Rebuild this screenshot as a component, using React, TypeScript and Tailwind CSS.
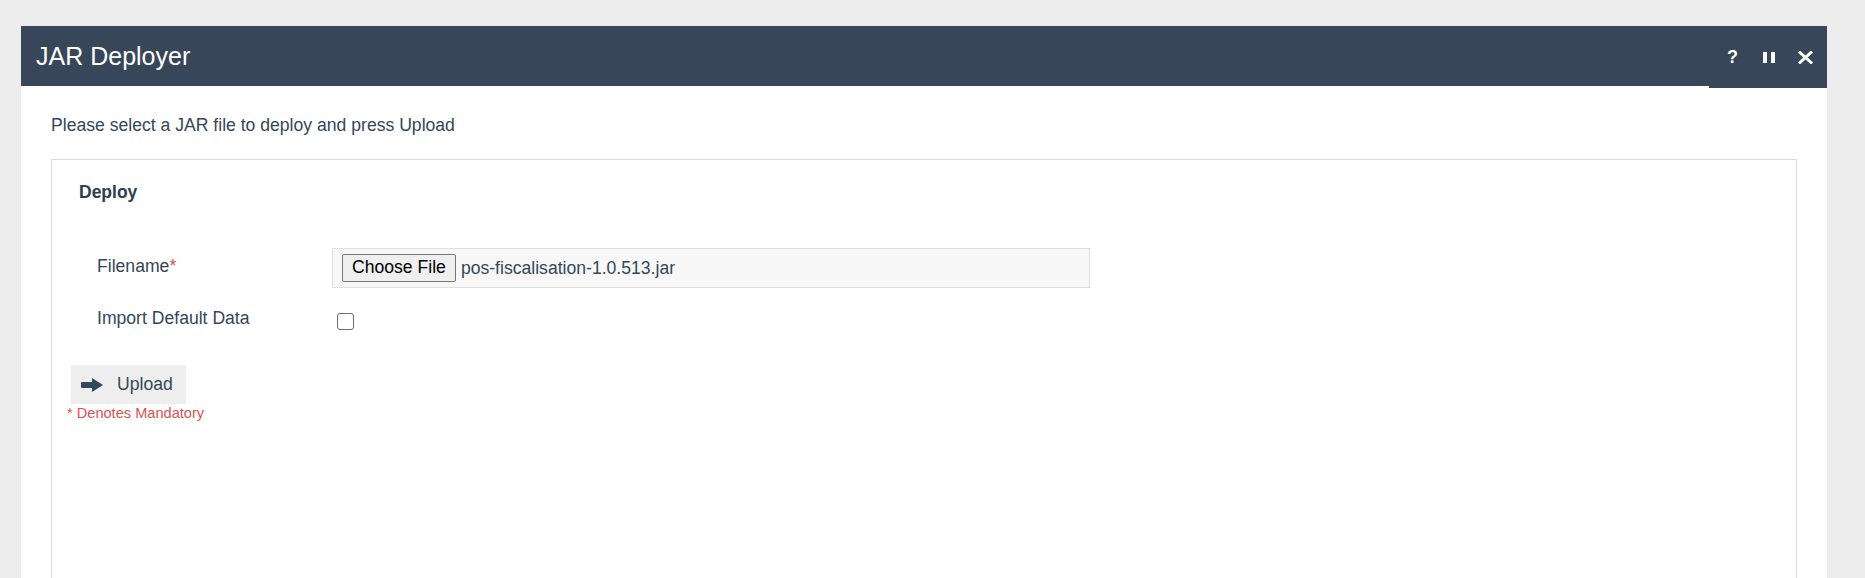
import { useState } from "react";

const font = { fontFamily: '"Liberation Sans", Arial, sans-serif' };

function ArrowIcon() {
  return (
    <svg width="22" height="14" viewBox="0 0 22 14" className="shrink-0">
      <rect x="0" y="4" width="12" height="6" rx="1" fill="#34475a" />
      <polygon points="11,0 22,7 11,14" fill="#34475a" />
    </svg>
  );
}

export default function App() {
  const [importData, setImportData] = useState(false);

  return (
    <div className="min-h-[578px] bg-[#ededed] pt-[26px] pl-[21px] pr-[38px]" style={font}>
      <div className="bg-white min-h-[560px]">
        {/* title bar */}
        <div className="flex h-[60px] items-start">
          <div className="flex-1 h-[60px] bg-[#374759] flex items-center pl-[15px]">
            <h1 className="text-white text-[25px] leading-none">JAR Deployer</h1>
          </div>
          <div className="relative z-10 w-[118px] h-[62px] bg-[#374759] flex items-center justify-end pr-[14px] text-white">
            <span className="text-[18px] font-bold leading-none">?</span>
            <span className="flex gap-[4px] h-[11px] mt-[1px] ml-[25px]">
              <span className="w-[4px] h-full bg-white" />
              <span className="w-[4px] h-full bg-white" />
            </span>
            <svg width="15" height="13" viewBox="0 0 15 13" className="ml-[23px]">
              <path d="M2 1.5 L13 11.5 M13 1.5 L2 11.5" stroke="white" strokeWidth="3" strokeLinecap="square" />
            </svg>
          </div>
        </div>

        {/* body */}
        <div className="px-[30px] pt-[28px]">
          <p className="text-[17.6px] text-[#34475a] leading-[22px]">
            Please select a JAR file to deploy and press Upload
          </p>

          <div className="mt-[23px] border border-[#dcdcdc] min-h-[430px] pt-[22px]">
            <h2 className="pl-[27px] text-[17.5px] font-bold text-[#2c3d4f] leading-[20px]">Deploy</h2>

            <div className="mt-[46px] pl-[45px]">
              <div className="flex items-center h-[40px]">
                <label className="w-[235px] text-[17.6px] text-[#34475a] -mt-[3px]">
                  Filename<span className="text-[#d9534f]">*</span>
                </label>
                <div className="w-[758px] h-[40px] bg-[#f7f7f7] border border-[#dedede] flex items-center pl-[9px]">
                  <button className="h-[28px] px-[9px] bg-[#efefef] border border-[#767676] rounded-[2px] text-[17.6px] text-black leading-none">
                    Choose File
                  </button>
                  <span className="ml-[5px] text-[17.6px] text-[#34475a]">pos-fiscalisation-1.0.513.jar</span>
                </div>
              </div>

              <div className="flex items-center mt-[18px] h-[30px]">
                <label className="w-[240px] text-[17.6px] text-[#34475a] -mt-[6px]">Import Default Data</label>
                <input
                  type="checkbox"
                  checked={importData}
                  onChange={(e) => setImportData(e.target.checked)}
                  className="appearance-none w-[17px] h-[17px] border border-[#6b6b6b] rounded-[3px] bg-white checked:bg-[#34475a]"
                />
              </div>
            </div>

            <div className="pl-[19px] mt-[29px]">
              <button className="flex items-center gap-[14px] h-[39px] w-[115px] bg-[#eeeeee] pl-[10px] text-[17.6px] text-[#34475a]">
                <ArrowIcon />
                Upload
              </button>
              <p className="-ml-[4px] mt-[1px] text-[14.6px] text-[#d9534f] leading-[17px]">* Denotes Mandatory</p>
            </div>
          </div>
        </div>
      </div>
    </div>
  );
}
